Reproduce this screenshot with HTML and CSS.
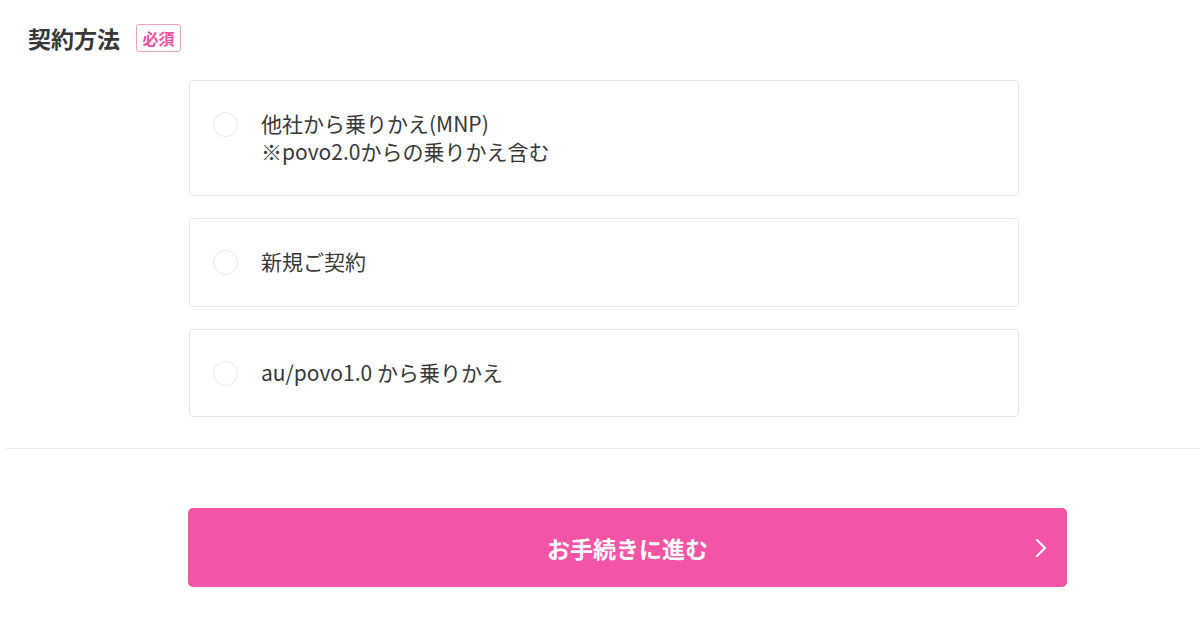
FILE: index.html
```html
<!DOCTYPE html>
<html lang="ja">
<head>
<meta charset="utf-8">
<link rel="stylesheet" href="styles.css">
</head>
<body>
<section class="field">
  <div class="field-head">
    <h2 class="field-title">契約方法</h2>
    <span class="badge">必須</span>
  </div>
  <div class="options">
    <label class="option">
      <span class="radio"></span>
      <span class="option-text">他社から乗りかえ(MNP)<br>※povo2.0からの乗りかえ含む</span>
    </label>
    <label class="option">
      <span class="radio"></span>
      <span class="option-text">新規ご契約</span>
    </label>
    <label class="option">
      <span class="radio"></span>
      <span class="option-text">au/povo1.0 から乗りかえ</span>
    </label>
  </div>
</section>
<div class="actions">
  <button class="next-btn" type="button">
    <span class="next-label">お手続きに進む</span>
    <svg class="chevron" width="12" height="20" viewBox="0 0 12 20" aria-hidden="true">
      <path d="M2 2 L10 10 L2 18" fill="none" stroke="#fff" stroke-width="2.2" stroke-linecap="round" stroke-linejoin="round"/>
    </svg>
  </button>
</div>
</body>
</html>
```

FILE: styles.css
```css
* { box-sizing: border-box; }
html, body { margin: 0; padding: 0; background: #fff; }
body {
  font-family: "Noto Sans CJK JP", "Noto Sans", sans-serif;
  color: #333;
  width: 1200px;
}
.field {
  margin-left: 6px;
  padding: 23px 0 31px 22px;
  border-bottom: 1px solid #ececec;
}
.field-head {
  display: flex;
  align-items: center;
  gap: 16px;
  height: 30px;
}
.field-title {
  margin: 0;
  font-size: 23px;
  line-height: 30px;
  font-weight: 700;
  color: #383838;
}
.badge {
  display: inline-flex;
  align-items: center;
  justify-content: center;
  width: 45px;
  height: 28px;
  border: 1px solid #f59bc7;
  border-radius: 3px;
  color: #f0509f;
  font-size: 16px;
  font-weight: 700;
  line-height: 1;
}
.options {
  margin: 27px 0 0 161px;
  width: 830px;
  display: flex;
  flex-direction: column;
  gap: 22px;
}
.option {
  display: flex;
  align-items: flex-start;
  gap: 23px;
  padding: 29px 23px 30px 23px;
  border: 1px solid #e6e6e6;
  border-radius: 4px;
  background: #fff;
}
.radio {
  flex: none;
  width: 25px;
  height: 25px;
  margin-top: 2px;
  border: 1px solid #e8e8e8;
  border-radius: 50%;
  background: #fff;
}
.option-text {
  font-size: 21px;
  line-height: 27.5px;
  color: #383838;
}
.actions {
  padding: 59px 0 0 188px;
}
.next-btn {
  position: relative;
  display: flex;
  align-items: center;
  justify-content: center;
  width: 879px;
  height: 79px;
  border: none;
  border-radius: 5px;
  background: #f354a5;
  color: #fff;
  font-family: "Noto Sans CJK JP", "Noto Sans", sans-serif;
  font-size: 23px;
  font-weight: 700;
  padding: 0;
  cursor: pointer;
}
.next-label { line-height: 30px; }
.chevron {
  position: absolute;
  right: 20px;
  top: 30px;
}
```
